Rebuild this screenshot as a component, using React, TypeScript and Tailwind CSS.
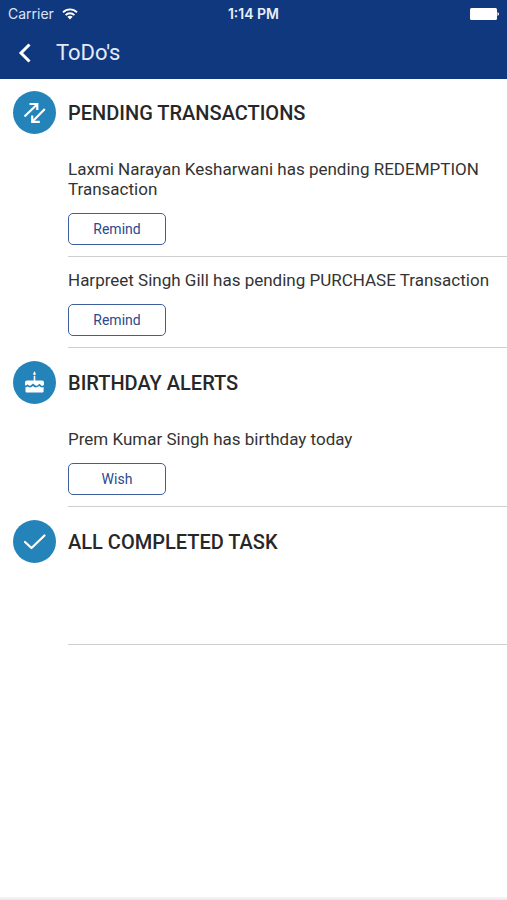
import type { ReactNode } from "react";

type Task = { text: string; action: string };

function StatusBar() {
  return (
    <div className="grid h-7 grid-cols-3 items-center px-2 font-['Inter',sans-serif] text-sm text-[#dde5f5]">
      <div className="flex items-center gap-2">
        <span>Carrier</span>
        <svg className="h-3 w-4" viewBox="0 0 16 12" fill="none" stroke="white" strokeWidth="1.9" aria-hidden="true">
          <path d="M1 4.4C5 .4 11 .4 15 4.4" />
          <path d="M3.6 7.1C6.1 4.7 9.9 4.7 12.4 7.1" />
          <path d="M8 11.5 5.4 8.8C6.9 7.5 9.1 7.5 10.6 8.8Z" fill="white" stroke="none" />
        </svg>
      </div>
      <span className="text-center font-semibold text-[#e9effb]">1:14 PM</span>
      <svg className="h-3 w-[30px] justify-self-end" viewBox="0 0 30 12" fill="white" aria-hidden="true">
        <rect x="1" y="0" width="27" height="12" rx="1.500" />
        <path d="M28.500 4C30.500 5 30.500 7 28.500 8Z" />
      </svg>
    </div>
  );
}

function SwapIcon() {
  return (
    <svg className="size-[43px]" viewBox="0 0 43 43" fill="none" stroke="white" strokeWidth="2.2" aria-hidden="true">
      <path d="M11.500 25.500 24 13.500" />
      <path d="M16.500 13H24.300V19" />
      <path d="M31.800 18 19.500 30.500" />
      <path d="M19.200 24.500V30.900H26.800" />
    </svg>
  );
}

function CakeIcon() {
  return (
    <svg className="size-[43px]" viewBox="0 0 43 43" fill="white" aria-hidden="true">
      <path d="M21.500 10.200C22.500 11.800 22.700 12.500 22.700 13A1.200 1.200 0 0 1 20.300 13C20.300 12.500 20.500 11.800 21.500 10.200Z" />
      <path d="M20.700 15H22.300V19.500H29A2 2 0 0 1 31 21.500V23.200C31 24.500 29.300 25.300 28 24.200L26.500 22.700 24.700 24.300C23.800 25.200 22.700 25 21.500 23.700L20 22.400 18.300 24C17.200 25 16.200 24.900 15.200 23.900L14.400 23.200 13.400 24.300C12.500 24.900 12 24.400 12 23.300V21.500A2 2 0 0 1 14 19.500H20.700Z" />
      <path d="M12.500 26.200C13.500 26.400 14.200 25.800 14.700 25.400C16.300 26.800 18.200 26.700 19.800 25.100C21.600 27 24 27 26.200 25.100C27.500 26.400 29 26.700 30.600 26.100V30.600A.8.8 0 0 1 29.800 31.400H13.300A.8.8 0 0 1 12.500 30.600Z" />
    </svg>
  );
}

function CheckIcon() {
  return (
    <svg className="size-[43px]" viewBox="0 0 43 43" fill="none" stroke="white" strokeWidth="2.200" strokeLinecap="round" strokeLinejoin="round" aria-hidden="true">
      <path d="M12 22 18.500 28 31.500 15.500" />
    </svg>
  );
}

function Section({ title, icon, tasks }: { title: string; icon: ReactNode; tasks: Task[] }) {
  return (
    <section>
      <div className="flex items-center gap-3 py-3 pl-[13px]">
        <div className="rounded-full bg-[#2484ba]">{icon}</div>
        <h2 className="text-xl font-medium text-[#272727]">{title}</h2>
      </div>
      <ul className="ml-[68px]">
        {tasks.map((task) => (
          <li key={task.text} className="flex flex-col items-start gap-3.5 border-b border-[#cfcfcf] pt-[13px] pb-[11px]">
            <p className="text-[17px] leading-5">{task.text}</p>
            <button className="h-8 w-[98px] rounded-[5px] border border-[#3e5f9d] text-sm text-[#2a4a8e]">
              {task.action}
            </button>
          </li>
        ))}
        {tasks.length === 0 && <li className="h-[70px] border-b border-[#cfcfcf]" />}
      </ul>
    </section>
  );
}

export default function App() {
  return (
    <div className="flex min-h-screen flex-col bg-white font-['Roboto',sans-serif] text-[#333333]">
      <header className="bg-[#10387e]">
        <StatusBar />
        <div className="flex h-[51px] items-center gap-5 pb-0.5 pl-3.5">
          <button aria-label="Back" className="p-1">
            <svg className="h-5 w-3.5" viewBox="0 0 14 20" fill="none" stroke="white" strokeWidth="3" aria-hidden="true">
              <path d="M11.500 1.500 3 10 11.500 18.500" />
            </svg>
          </button>
          <h1 className="text-[22px] text-[#e3eaf8]">ToDo's</h1>
        </div>
      </header>
      <main className="flex-1 space-y-px">
        <Section
          title="PENDING TRANSACTIONS"
          icon={<SwapIcon />}
          tasks={[
            { text: "Laxmi Narayan Kesharwani has pending REDEMPTION Transaction", action: "Remind" },
            { text: "Harpreet Singh Gill has pending PURCHASE Transaction", action: "Remind" },
          ]}
        />
        <Section
          title="BIRTHDAY ALERTS"
          icon={<CakeIcon />}
          tasks={[{ text: "Prem Kumar Singh has birthday today", action: "Wish" }]}
        />
        <Section title="ALL COMPLETED TASK" icon={<CheckIcon />} tasks={[]} />
      </main>
      <footer className="h-[3px] bg-linear-to-b from-[#f6f6f6] to-[#e8e8e8]" />
    </div>
  );
}
